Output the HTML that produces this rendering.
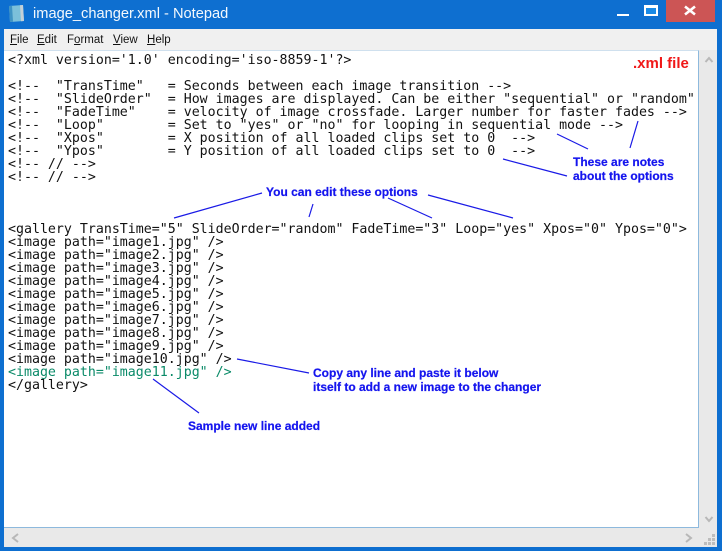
<!DOCTYPE html>
<html>
<head>
<meta charset="utf-8">
<style>
html,body{margin:0;padding:0;width:722px;height:551px;overflow:hidden;background:#0e6fd0}
div,pre,span.a{position:absolute}
#title{left:33px;top:5px;font:14.65px/18px "Liberation Sans",sans-serif;color:#f4f9fd;white-space:nowrap}
#client{left:4px;top:29px;width:713px;height:518px;background:#e9e9e9}
#menu{left:4px;top:29px;width:713px;height:21px;background:#f0f0f0}
.m{top:33px;font:11.5px/14px "Liberation Sans",sans-serif;color:#111;white-space:nowrap}
#edit{left:4px;top:50px;width:694px;height:476px;background:#fff;border-right:1px solid #8db9dd;border-bottom:1px solid #8db9dd;border-top:1px solid #cfe0ee}
pre{margin:0;left:8px;top:54px;font:13.28px/13px "DejaVu Sans Mono","Liberation Mono",monospace;color:#111;white-space:pre}
.g{color:#0a8a68}
.b{font:bold 12px/14px "Liberation Sans",sans-serif;color:#1414ee;white-space:nowrap;-webkit-text-stroke:.2px #1414ee}
#x{left:633px;top:56px;font:bold 15px/16px "Liberation Sans",sans-serif;color:#f01818;white-space:nowrap}
#close{left:666px;top:0;width:49px;height:22px;background:#cc5555}
#maxb{left:644px;top:5px;width:10px;height:6px;background:#1a8ae6;border:2px solid #fff;border-top-width:3px}
#minb{left:617px;top:14px;width:12px;height:2px;background:#fff}
svg{position:absolute;left:0;top:0}
</style>
</head>
<body>
<div id="title">image_changer.xml - Notepad</div>
<div id="client"></div>
<div id="menu"></div>
<div class="m" style="left:10px"><u>F</u>ile</div>
<div class="m" style="left:37px"><u>E</u>dit</div>
<div class="m" style="left:67px">F<u>o</u>rmat</div>
<div class="m" style="left:113px"><u>V</u>iew</div>
<div class="m" style="left:147px"><u>H</u>elp</div>
<div id="edit"></div>
<pre>&lt;?xml version='1.0' encoding='iso-8859-1'?&gt;

&lt;!--  "TransTime"   = Seconds between each image transition --&gt;
&lt;!--  "SlideOrder"  = How images are displayed. Can be either "sequential" or "random"
&lt;!--  "FadeTime"    = velocity of image crossfade. Larger number for faster fades --&gt;
&lt;!--  "Loop"        = Set to "yes" or "no" for looping in sequential mode --&gt;
&lt;!--  "Xpos"        = X position of all loaded clips set to 0  --&gt;
&lt;!--  "Ypos"        = Y position of all loaded clips set to 0  --&gt;
&lt;!-- // --&gt;
&lt;!-- // --&gt;



&lt;gallery TransTime="5" SlideOrder="random" FadeTime="3" Loop="yes" Xpos="0" Ypos="0"&gt;
&lt;image path="image1.jpg" /&gt;
&lt;image path="image2.jpg" /&gt;
&lt;image path="image3.jpg" /&gt;
&lt;image path="image4.jpg" /&gt;
&lt;image path="image5.jpg" /&gt;
&lt;image path="image6.jpg" /&gt;
&lt;image path="image7.jpg" /&gt;
&lt;image path="image8.jpg" /&gt;
&lt;image path="image9.jpg" /&gt;
&lt;image path="image10.jpg" /&gt;
<span class="g">&lt;image path="image11.jpg" /&gt;</span>
&lt;/gallery&gt;</pre>
<div id="x">.xml file</div>
<div class="b" style="left:266px;top:185px">You can edit these options</div>
<div class="b" style="left:573px;top:155px">These are notes</div>
<div class="b" style="left:573px;top:169px">about the options</div>
<div class="b" style="left:313px;top:366px">Copy any line and paste it below</div>
<div class="b" style="left:313px;top:380px">itself to add a new image to the changer</div>
<div class="b" style="left:188px;top:419px">Sample new line added</div>
<div id="close"></div>
<div id="maxb"></div>
<div id="minb"></div>
<svg width="722" height="551" viewBox="0 0 722 551" fill="none">
<g stroke="#1a1ae6" stroke-width="1.2">
<path d="M174 218L262 193"/>
<path d="M313 204L309 217"/>
<path d="M388 198L432 218"/>
<path d="M428 195L513 218"/>
<path d="M557 134L588 149"/>
<path d="M638 121L630 148"/>
<path d="M503 159L567 176"/>
<path d="M237 359L309 373"/>
<path d="M153 379L199 413"/>
</g>
<path d="M685 6.5L695 14.5M695 6.5L685 14.5" stroke="#fff" stroke-width="2.6"/>
<path d="M9 6L23 5L24 21L10 22Z" fill="#7cc0da"/>
<path d="M20 5.2L23 5L24 21L21 21.2Z" fill="#c4d0d8"/>
<path d="M9 6L12 5.8L13 21.8L10 22Z" fill="#3f93c4"/>
<g stroke="#b8b8b8" stroke-width="2">
<path d="M705.5 62L709 58L712.5 62"/>
<path d="M705.5 517L709 521L712.5 517"/>
<path d="M18 534L13 538L18 542"/>
<path d="M686 534L691 538L686 542"/>
</g>
<g fill="#bdbdbd">
<rect x="712" y="534" width="3" height="3"/>
<rect x="708" y="538" width="3" height="3"/><rect x="712" y="538" width="3" height="3"/>
<rect x="704" y="542" width="3" height="3"/><rect x="708" y="542" width="3" height="3"/><rect x="712" y="542" width="3" height="3"/>
</g>
</svg>
</body>
</html>
